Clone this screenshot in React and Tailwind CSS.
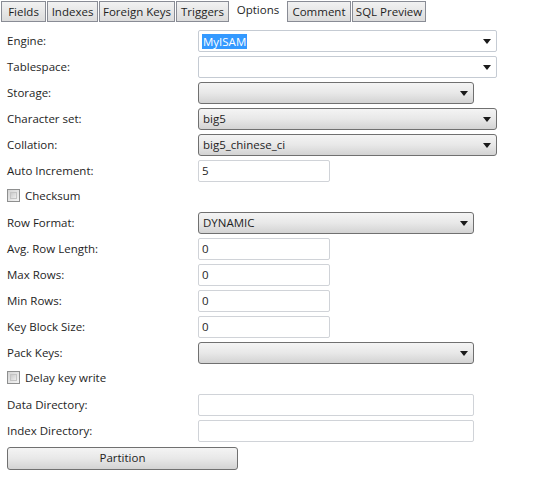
import React from "react";

const font = { fontFamily: '"Open Sans", "Noto Sans", sans-serif' };

const tabs = [
  { name: "Fields", w: "w-[45px]" },
  { name: "Indexes", w: "w-[51px]" },
  { name: "Foreign Keys", w: "w-[76px]" },
  { name: "Triggers", w: "w-[53px]" },
  { name: "Options", w: "w-[56px]", active: true },
  { name: "Comment", w: "w-[64px]" },
  { name: "SQL Preview", w: "w-[74px]" },
];

const Arrow = () => (
  <svg width="8" height="5" viewBox="0 0 8 5" className="shrink-0">
    <path d="M0 0h8L4 5z" fill="#1a1a1a" />
  </svg>
);

// editable combo (white box)
const EditCombo = ({ value, selected }) => (
  <div className="flex h-[22px] w-[299px] items-center justify-between rounded-[2px] border border-[#c5cbd3] bg-white pl-[3px] pr-[5px]">
    <span className={selected ? "bg-[#3399ff] px-[1px] leading-[15px] text-white" : ""}>
      {value}
    </span>
    <Arrow />
  </div>
);

// read-only combo (button look)
const Combo = ({ value, wide }) => (
  <div
    className={`flex h-[22px] items-center justify-between rounded-[3px] border border-[#707070] bg-gradient-to-b from-[#f4f4f4] via-[#e8e8e8] to-[#d3d3d3] pl-[4px] pr-[5px] ${
      wide ? "w-[299px]" : "w-[276px]"
    }`}
  >
    <span>{value}</span>
    <Arrow />
  </div>
);

const TextBox = ({ value, wide }) => (
  <div
    className={`flex h-[22px] items-center rounded-[2px] border border-[#d0d3d8] bg-white px-[3px] ${
      wide ? "w-[276px]" : "w-[132px]"
    }`}
  >
    {value}
  </div>
);

const Row = ({ label, children }) => (
  <div className="flex h-[26px] items-center">
    <div className="w-[191px]">{label}</div>
    {children}
  </div>
);

const Check = ({ label }) => (
  <div className="flex h-[26px] items-start pt-[3px]">
    <div className="flex items-center gap-[5px]">
      <div className="h-[13px] w-[13px] border border-[#8e8f8f] bg-gradient-to-br from-[#d4d4d4] to-[#f4f4f4] p-[2px]">
        <div className="h-full w-full border border-[#c4c4c4] bg-gradient-to-br from-[#cbcbcb] to-[#ededed]" />
      </div>
      <span>{label}</span>
    </div>
  </div>
);

export default function App() {
  return (
    <div className="h-[495px] w-[555px] bg-white text-[11.5px] text-[#1e1e1e]" style={font}>
      {/* tab strip */}
      <div className="flex h-[22px] items-end gap-[1px] pl-[1px]">
        {tabs.map((t) =>
          t.active ? (
            <div key={t.name} className={`${t.w} flex h-[22px] items-center justify-center bg-white pb-[2px]`}>
              {t.name}
            </div>
          ) : (
            <div
              key={t.name}
              className={`${t.w} flex h-[21px] items-center justify-center whitespace-nowrap border border-[#898c95] bg-gradient-to-b from-[#f2f2f2] to-[#dcdcdc]`}
            >
              {t.name}
            </div>
          )
        )}
      </div>

      <div className="pl-[7px] pt-[6px]">
        <Row label="Engine:">
          <EditCombo value="MyISAM" selected />
        </Row>
        <Row label="Tablespace:">
          <EditCombo value="" />
        </Row>
        <Row label="Storage:">
          <Combo value="" />
        </Row>
        <Row label="Character set:">
          <Combo value="big5" wide />
        </Row>
        <Row label="Collation:">
          <Combo value="big5_chinese_ci" wide />
        </Row>
        <Row label="Auto Increment:">
          <TextBox value="5" />
        </Row>
        <Check label="Checksum" />
        <Row label="Row Format:">
          <Combo value="DYNAMIC" />
        </Row>
        <Row label="Avg. Row Length:">
          <TextBox value="0" />
        </Row>
        <Row label="Max Rows:">
          <TextBox value="0" />
        </Row>
        <Row label="Min Rows:">
          <TextBox value="0" />
        </Row>
        <Row label="Key Block Size:">
          <TextBox value="0" />
        </Row>
        <Row label="Pack Keys:">
          <Combo value="" />
        </Row>
        <Check label="Delay key write" />
        <Row label="Data Directory:">
          <TextBox value="" wide />
        </Row>
        <Row label="Index Directory:">
          <TextBox value="" wide />
        </Row>
        <div className="flex h-[26px] items-center pt-[2px]">
          <button className="flex h-[23px] w-[231px] items-center justify-center rounded-[3px] border border-[#707070] bg-gradient-to-b from-[#f4f4f4] via-[#e8e8e8] to-[#d3d3d3]">
            Partition
          </button>
        </div>
      </div>
    </div>
  );
}
